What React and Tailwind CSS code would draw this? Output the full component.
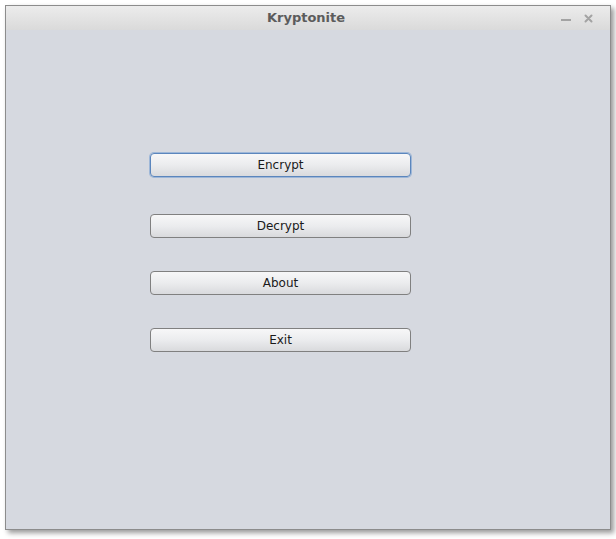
export default function App() {
  const buttons = [
    { label: 'Encrypt', focused: true, mt: 'mt-[123px]' },
    { label: 'Decrypt', mt: 'mt-[37px]' },
    { label: 'About', mt: 'mt-[33px]' },
    { label: 'Exit', mt: 'mt-[33px]' },
  ];

  return (
    <div className="w-[616px] h-[539px] bg-white pl-[5px] pt-[5px] font-['DejaVu_Sans',sans-serif]">
      <div className="w-[606px] h-[525px] border border-[#8c8c8c] bg-[#d6d9e0] shadow-[3px_3px_5px_rgba(0,0,0,0.4)] flex flex-col">
        {/* Title bar */}
        <div className="h-[24px] bg-gradient-to-b from-[#ececec] to-[#dadada] flex items-center relative">
          <div className="flex-1 text-center text-[13px] font-bold text-[#5c5c5c] pr-[4px]">Kryptonite</div>
          <div className="absolute right-[17px] top-[7px] flex items-center gap-[13px]">
            <svg width="10" height="10" viewBox="0 0 10 10">
              <rect x="0" y="6" width="10" height="2" fill="#a3a3a3" />
            </svg>
            <svg width="9" height="9" viewBox="0 0 9 9">
              <path d="M1.5 1.5 L7.5 7.5 M7.5 1.5 L1.5 7.5" stroke="#a3a3a3" strokeWidth="2" strokeLinecap="round" />
            </svg>
          </div>
        </div>

        {/* Content */}
        <div className="flex-1 flex flex-col pl-[144px]">
          {buttons.map((b) => (
            <button
              key={b.label}
              className={`${b.mt} w-[261px] h-[24px] rounded-[4px] border text-[12px] text-[#1a1a1a] bg-gradient-to-b from-[#f7f7f8] via-[#ebecee] to-[#d9dadd] ${
                b.focused
                  ? 'border-[#5b86bd] shadow-[0_0_0_1px_rgba(120,160,210,0.6)]'
                  : 'border-[#808080]'
              }`}
            >
              {b.label}
            </button>
          ))}
        </div>
      </div>
    </div>
  );
}
